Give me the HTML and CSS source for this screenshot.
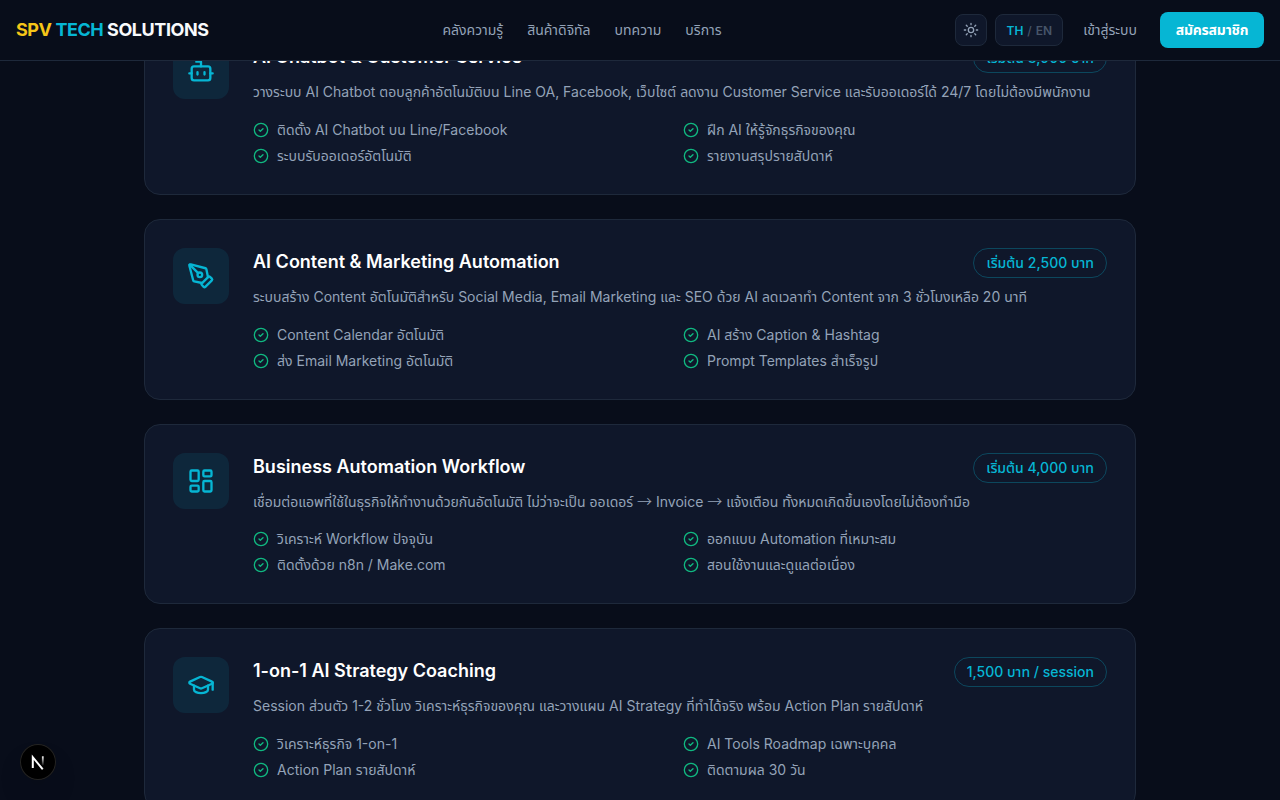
FILE: index.html
```html
<!DOCTYPE html>
<html lang="th">
<head>
  <meta charset="UTF-8" />
  <meta name="viewport" content="width=device-width, initial-scale=1.0"/>
  <title>บริการ - SPV Tech Solutions</title>
  <link rel="stylesheet" href="styles.css">
</head>
<body>
  <svg width="0" height="0" class="sprite">
    <symbol id="check" viewBox="0 0 24 24">
      <circle cx="12" cy="12" r="10"/>
      <path d="m9 12 2 2 4-4"/>
    </symbol>
  </svg>

  <header class="header">
    <a class="logo"><span class="yellow">SPV</span> <span class="cyan">TECH</span> SOLUTIONS</a>
    <nav class="nav">
      <a>คลังความรู้</a>
      <a>สินค้าดิจิทัล</a>
      <a>บทความ</a>
      <a>บริการ</a>
    </nav>
    <div class="actions">
      <button class="theme-btn">
        <svg class="icon" width="16" height="16" viewBox="0 0 24 24"><circle cx="12" cy="12" r="4"/><path d="M12 2v2M12 20v2M4.93 4.93l1.41 1.41M17.66 17.66l1.41 1.41M2 12h2M20 12h2M6.34 17.66l-1.41 1.41M19.07 4.93l-1.41 1.41"/></svg>
      </button>
      <button class="lang-btn"><span class="cyan">TH</span><span class="sep">/</span><span class="off">EN</span></button>
      <a class="login">เข้าสู่ระบบ</a>
      <a class="signup">สมัครสมาชิก</a>
    </div>
  </header>

  <main class="services">
    <div class="card">
      <div class="card-icon">
        <svg class="icon" width="28" height="28" viewBox="0 0 24 24"><path d="M12 8V4H8"/><rect width="16" height="12" x="4" y="8" rx="2"/><path d="M2 14h2M20 14h2M15 13v2M9 13v2"/></svg>
      </div>
      <div class="card-body">
        <div class="card-head">
          <h3>AI Chatbot &amp; Customer Service</h3>
          <span class="price">เริ่มต้น 3,000 บาท</span>
        </div>
        <p>วางระบบ AI Chatbot ตอบลูกค้าอัตโนมัติบน Line OA, Facebook, เว็บไซต์ ลดงาน Customer Service และรับออเดอร์ได้ 24/7 โดยไม่ต้องมีพนักงาน</p>
        <ul class="features">
          <li><svg class="check"><use href="#check"/></svg>ติดตั้ง AI Chatbot บน Line/Facebook</li>
          <li><svg class="check"><use href="#check"/></svg>ฝึก AI ให้รู้จักธุรกิจของคุณ</li>
          <li><svg class="check"><use href="#check"/></svg>ระบบรับออเดอร์อัตโนมัติ</li>
          <li><svg class="check"><use href="#check"/></svg>รายงานสรุปรายสัปดาห์</li>
        </ul>
      </div>
    </div>

    <div class="card">
      <div class="card-icon">
        <svg class="icon" width="28" height="28" viewBox="0 0 24 24"><path d="M15.707 21.293a1 1 0 0 1-1.414 0l-1.586-1.586a1 1 0 0 1 0-1.414l5.586-5.586a1 1 0 0 1 1.414 0l1.586 1.586a1 1 0 0 1 0 1.414z"/><path d="m18 13-1.375-6.874a1 1 0 0 0-.746-.776L3.235 2.028a1 1 0 0 0-1.207 1.207L5.35 15.879a1 1 0 0 0 .776.746L13 18"/><path d="m2.3 2.3 7.286 7.286"/><circle cx="11" cy="11" r="2"/></svg>
      </div>
      <div class="card-body">
        <div class="card-head">
          <h3>AI Content &amp; Marketing Automation</h3>
          <span class="price">เริ่มต้น 2,500 บาท</span>
        </div>
        <p>ระบบสร้าง Content อัตโนมัติสำหรับ Social Media, Email Marketing และ SEO ด้วย AI ลดเวลาทำ Content จาก 3 ชั่วโมงเหลือ 20 นาที</p>
        <ul class="features">
          <li><svg class="check"><use href="#check"/></svg>Content Calendar อัตโนมัติ</li>
          <li><svg class="check"><use href="#check"/></svg>AI สร้าง Caption &amp; Hashtag</li>
          <li><svg class="check"><use href="#check"/></svg>ส่ง Email Marketing อัตโนมัติ</li>
          <li><svg class="check"><use href="#check"/></svg>Prompt Templates สำเร็จรูป</li>
        </ul>
      </div>
    </div>

    <div class="card">
      <div class="card-icon">
        <svg class="icon" width="28" height="28" viewBox="0 0 24 24"><rect width="7" height="9" x="3" y="3" rx="1"/><rect width="7" height="5" x="14" y="3" rx="1"/><rect width="7" height="9" x="14" y="12" rx="1"/><rect width="7" height="5" x="3" y="16" rx="1"/></svg>
      </div>
      <div class="card-body">
        <div class="card-head">
          <h3>Business Automation Workflow</h3>
          <span class="price">เริ่มต้น 4,000 บาท</span>
        </div>
        <p>เชื่อมต่อแอพที่ใช้ในธุรกิจให้ทำงานด้วยกันอัตโนมัติ ไม่ว่าจะเป็น ออเดอร์ <span class="arrow">→</span> Invoice <span class="arrow">→</span> แจ้งเตือน ทั้งหมดเกิดขึ้นเองโดยไม่ต้องทำมือ</p>
        <ul class="features">
          <li><svg class="check"><use href="#check"/></svg>วิเคราะห์ Workflow ปัจจุบัน</li>
          <li><svg class="check"><use href="#check"/></svg>ออกแบบ Automation ที่เหมาะสม</li>
          <li><svg class="check"><use href="#check"/></svg>ติดตั้งด้วย n8n / Make.com</li>
          <li><svg class="check"><use href="#check"/></svg>สอนใช้งานและดูแลต่อเนื่อง</li>
        </ul>
      </div>
    </div>

    <div class="card">
      <div class="card-icon">
        <svg class="icon" width="28" height="28" viewBox="0 0 24 24"><path d="M21.42 10.922a1 1 0 0 0-.019-1.838L12.83 5.18a2 2 0 0 0-1.66 0L2.6 9.08a1 1 0 0 0 0 1.832l8.57 3.908a2 2 0 0 0 1.66 0z"/><path d="M22 10v6"/><path d="M6 12.5V16a6 3 0 0 0 12 0v-3.5"/></svg>
      </div>
      <div class="card-body">
        <div class="card-head">
          <h3>1-on-1 AI Strategy Coaching</h3>
          <span class="price">1,500 บาท / session</span>
        </div>
        <p>Session ส่วนตัว 1-2 ชั่วโมง วิเคราะห์ธุรกิจของคุณ และวางแผน AI Strategy ที่ทำได้จริง พร้อม Action Plan รายสัปดาห์</p>
        <ul class="features">
          <li><svg class="check"><use href="#check"/></svg>วิเคราะห์ธุรกิจ 1-on-1</li>
          <li><svg class="check"><use href="#check"/></svg>AI Tools Roadmap เฉพาะบุคคล</li>
          <li><svg class="check"><use href="#check"/></svg>Action Plan รายสัปดาห์</li>
          <li><svg class="check"><use href="#check"/></svg>ติดตามผล 30 วัน</li>
        </ul>
      </div>
    </div>
  </main>

  <div class="dev-badge">
    <svg width="36" height="36" viewBox="0 0 36 36" fill="none">
      <defs>
        <linearGradient id="fade1" x1="19" y1="20" x2="25" y2="27" gradientUnits="userSpaceOnUse"><stop stop-color="#fff"/><stop offset="0.6" stop-color="#fff"/><stop offset="1" stop-color="#fff" stop-opacity="0"/></linearGradient>
        <linearGradient id="fade2" x1="24" y1="12" x2="24" y2="22" gradientUnits="userSpaceOnUse"><stop stop-color="#fff"/><stop offset="1" stop-color="#fff" stop-opacity="0"/></linearGradient>
      </defs>
      <path d="M12.8 24V13.2L22.8 25.4" stroke="url(#fade1)" stroke-width="2"/>
      <path d="M22.8 12.3v9" stroke="url(#fade2)" stroke-width="1.8"/>
    </svg>
  </div>
</body>
</html>
```
FILE: styles.css
```css
* {
  box-sizing: border-box;
  margin: 0;
  padding: 0;
}
body {
  height: 800px;
  overflow: hidden;
  background-color: #080d1a;
  color: #f8fafc;
  font-family: Inter, "Noto Sans Thai", "Noto Sans", sans-serif;
  font-size: 14px;
  line-height: 20px;
}
.sprite {
  position: absolute;
}
.icon, .check {
  fill: none;
  stroke: currentColor;
  stroke-width: 2;
  stroke-linecap: round;
  stroke-linejoin: round;
}
.yellow {
  color: #f5c518;
}
.cyan {
  color: #06b6d4;
}

/* Header */
.header {
  position: fixed;
  top: 0;
  left: 0;
  right: 0;
  z-index: 10;
  height: 61px;
  padding: 0 16px;
  display: flex;
  align-items: center;
  justify-content: space-between;
  background-color: #080d1a;
  border-bottom: 1px solid #1e293b;
}
.logo {
  font-size: 18px;
  line-height: 28px;
  font-weight: 700;
  letter-spacing: -0.45px;
}
.nav {
  display: flex;
  gap: 24px;
  color: #94a3b8;
}
.actions {
  display: flex;
  align-items: center;
  gap: 8px;
}
.theme-btn, .lang-btn {
  height: 32px;
  display: flex;
  align-items: center;
  justify-content: center;
  background-color: #0f172a;
  border: 1px solid #1e293b;
  border-radius: 8px;
  color: #94a3b8;
  font-family: inherit;
}
.theme-btn {
  width: 32px;
}
.lang-btn {
  padding: 0 10px;
  gap: 4px;
  font-size: 12px;
  font-weight: 600;
}
.sep, .off {
  color: #475569;
}
.sep {
  font-weight: 500;
}
.login {
  padding: 8px 12px;
  color: #94a3b8;
}
.signup {
  width: 104px;
  margin-left: 3px;
  padding: 8px 0;
  border-radius: 8px;
  background-color: #06b6d4;
  color: #fff;
  font-weight: 700;
  letter-spacing: -0.2px;
  text-align: center;
}

/* Services */
.services {
  width: 992px;
  margin: 0 auto;
  padding-top: 14.1px;
  display: flex;
  flex-direction: column;
  gap: 24px;
}
.card {
  display: flex;
  gap: 24px;
  padding: 28px;
  background-color: #0f172a;
  border: 1px solid #1e293b;
  border-radius: 16px;
}
.card-icon {
  width: 56px;
  height: 56px;
  flex-shrink: 0;
  display: flex;
  align-items: center;
  justify-content: center;
  border-radius: 12px;
  background-color: rgba(6, 182, 212, 0.1);
  color: #06b6d4;
}
.card-body {
  flex: 1;
}
.card-head {
  display: flex;
  align-items: flex-start;
  justify-content: space-between;
  margin-bottom: 8px;
}
.card h3 {
  font-size: 18px;
  line-height: 28px;
  font-weight: 600;
  color: #fff;
}
.price {
  padding: 4px 12px;
  border: 1px solid rgba(6, 182, 212, 0.3);
  border-radius: 999px;
  color: #06b6d4;
  font-weight: 500;
}
.card p {
  margin-bottom: 16px;
  line-height: 22.75px;
  color: #94a3b8;
}
.arrow {
  font-family: "Noto Sans CJK JP", sans-serif;
  font-size: 15px;
  font-weight: 300;
  line-height: 1;
}
.features {
  list-style: none;
  display: grid;
  grid-template-columns: 1fr 1fr;
  gap: 6px 6px;
}
.features li {
  display: flex;
  align-items: center;
  gap: 8px;
  color: #94a3b8;
}
.check {
  width: 16px;
  height: 16px;
  flex-shrink: 0;
  color: #10b981;
}

.dev-badge {
  position: fixed;
  left: 20px;
  bottom: 20px;
  width: 36px;
  height: 36px;
  border-radius: 50%;
  background-color: #000;
  box-shadow: inset 0 0 0 1px #242424, 0 16px 32px -8px rgba(0, 0, 0, 0.24);
}
```
